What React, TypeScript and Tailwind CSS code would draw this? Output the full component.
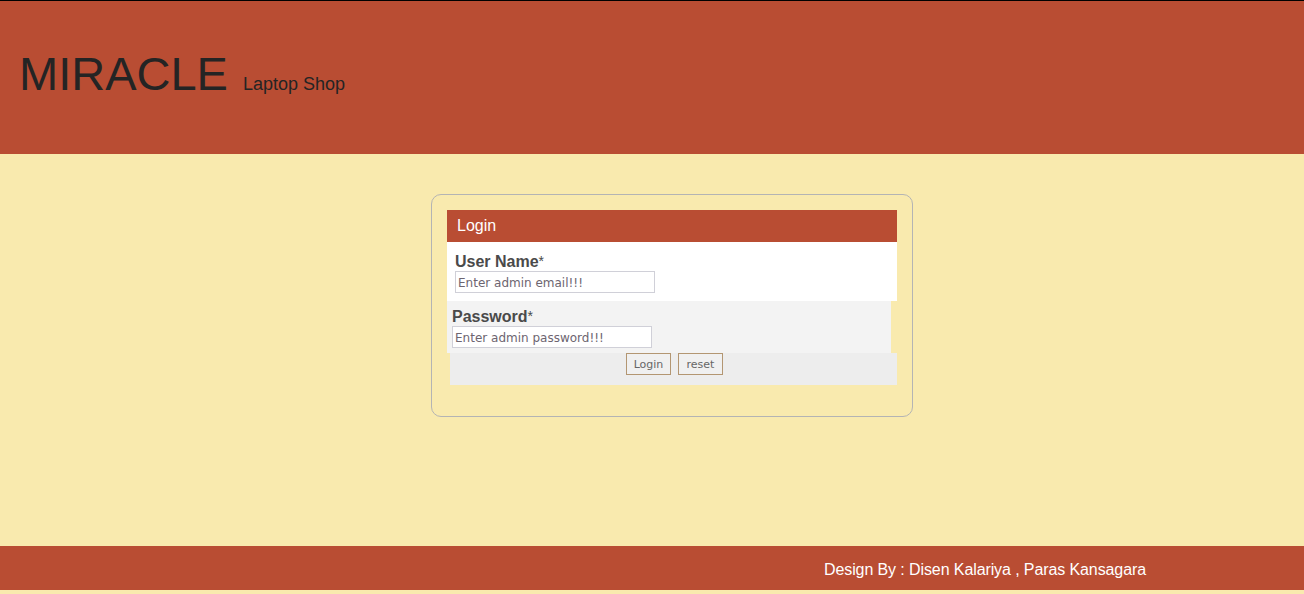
export default function App() {
  return (
    <div className="flex min-h-[594px] flex-col bg-[#f9eaae] font-['Liberation_Sans',Arial,sans-serif]">
      <header className="h-[154px] border-t border-black bg-[#b94d33]">
        <div className="flex items-baseline pl-[19px] pt-[45px]">
          <h1 className="text-[47px] leading-[56px] text-[#242424]">MIRACLE</h1>
          <span className="ml-[15px] text-[18px] text-[#242424]">Laptop Shop</span>
        </div>
      </header>

      <main className="flex-1 pt-[40px]">
        <div className="ml-[431px] w-[482px] rounded-[10px] border border-[#b4b4b4] px-[15px] pt-[15px] pb-[31px]">
          <div className="w-[450px]">
            <div className="flex h-[32px] items-center bg-[#b94d33] pl-[10px] text-[16px] text-white">Login</div>

            <div className="h-[59px] bg-white pl-[8px] pt-[10px]">
              <label className="block text-[16px] leading-[19px] font-bold text-[#4a4a4a]">
                User Name<span className="align-top text-[14px] font-normal">*</span>
              </label>
              <input
                className="block h-[22px] w-[200px] border border-[#d0d0d8] bg-white px-[2px] pt-[1px] font-['DejaVu_Sans',Tahoma,sans-serif] text-[12px] text-[#555] placeholder:text-[#6d6570]"
                placeholder="Enter admin email!!!"
              />
            </div>

            <div className="h-[52px] w-[444px] bg-[#f3f3f3] pl-[5px] pt-[6px]">
              <label className="block text-[16px] leading-[19px] font-bold text-[#4a4a4a]">
                Password<span className="align-top text-[14px] font-normal">*</span>
              </label>
              <input
                className="block h-[22px] w-[200px] border border-[#d0d0d8] bg-white px-[2px] pt-[1px] font-['DejaVu_Sans',Tahoma,sans-serif] text-[12px] text-[#555] placeholder:text-[#6d6570]"
                placeholder="Enter admin password!!!"
              />
            </div>

            <div className="ml-[3px] flex h-[32px] w-[447px] justify-center gap-[7px] bg-[#ededed] pl-[2px]">
              <button className="h-[22px] w-[45px] border border-[#b39672] bg-[#f0f0f0] pt-[2px] font-['DejaVu_Sans',Tahoma,sans-serif] text-[11px] text-[#666]">
                Login
              </button>
              <button className="h-[22px] w-[45px] border border-[#b39672] bg-[#f0f0f0] pt-[2px] font-['DejaVu_Sans',Tahoma,sans-serif] text-[11px] text-[#666]">
                reset
              </button>
            </div>
          </div>
        </div>
      </main>

      <footer className="mb-[4px] flex h-[44px] items-center bg-[#b94d33] pt-[3px] pl-[824px] text-[16px] tracking-[-0.1px] text-white">
        Design By : Disen Kalariya , Paras Kansagara
      </footer>
    </div>
  )
}
